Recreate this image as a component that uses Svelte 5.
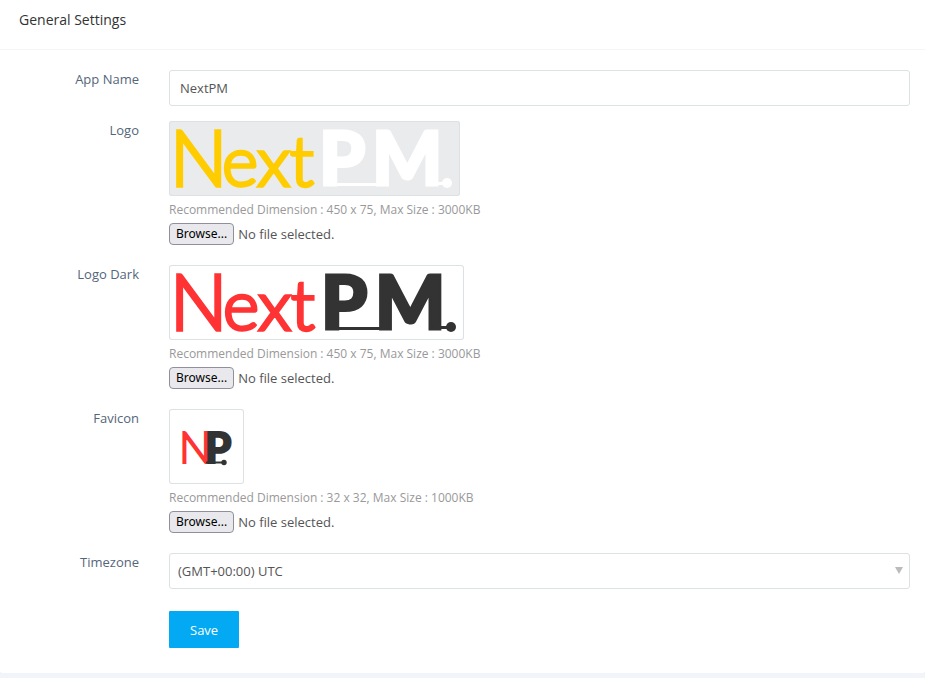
<script>
  let appName = $state('NextPM');
  let timezone = $state('UTC');
  let picked = $state({});
  let inputs = $state({});

  const uploads = [
    { id: 'logo', label: 'Logo', hint: 'Recommended Dimension : 450 x 75, Max Size : 3000KB' },
    { id: 'logo-dark', label: 'Logo Dark', hint: 'Recommended Dimension : 450 x 75, Max Size : 3000KB' },
    { id: 'favicon', label: 'Favicon', hint: 'Recommended Dimension : 32 x 32, Max Size : 1000KB' }
  ];

  function choose(id, event) {
    picked[id] = event.currentTarget.files[0]?.name;
  }
</script>

<main class="panel">
  <header><h1>General Settings</h1></header>

  <form onsubmit={(e) => e.preventDefault()}>
    <div class="row">
      <label for="app-name">App Name</label>
      <input id="app-name" class="control" type="text" bind:value={appName} />
    </div>

    {#each uploads as item (item.id)}
      <div class="row">
        <label for={item.id}>{item.label}</label>
        <div class="upload">
          {#if item.id === 'favicon'}
            <svg class="thumb" width="75" height="75" viewBox="0 0 75 75" role="img" aria-label="Favicon preview">
              <text class="thin" x="10" y="54" font-size="43" fill="#ff3333" stroke="#ff3333" stroke-width="2">N</text>
              <text class="heavy" x="36" y="54" font-size="42" fill="#333333" stroke="#333333" stroke-width="2">P</text>
              <path d="M37 53.5H55" stroke="#333333" stroke-width="2" />
              <circle cx="55" cy="53.5" r="2.7" fill="#333333" />
            </svg>
          {:else if item.id === 'logo'}
            <svg class="thumb tinted" width="291" height="75" viewBox="0 0 291 75" role="img" aria-label="Logo preview">
              <text class="thin" x="1" y="65" font-size="76" fill="#ffcc00" stroke="#ffcc00" stroke-width="3.5">N</text>
              <text class="thin" x="53" y="65" font-size="69" fill="#ffcc00" stroke="#ffcc00" stroke-width="3.5">ext</text>
              <text class="heavy" x="150" y="64" font-size="74" fill="#ffffff" stroke="#ffffff" stroke-width="3">P</text>
              <text class="heavy" x="203" y="64" font-size="74" fill="#ffffff" stroke="#ffffff" stroke-width="3">M</text>
              <path d="M155 63.5H215M262 62.5H278" stroke="#ffffff" stroke-width="3" />
              <circle cx="278" cy="62" r="5" fill="#ffffff" />
            </svg>
          {:else}
            <svg class="thumb" width="295" height="75" viewBox="0 0 295 75" role="img" aria-label="Dark logo preview">
              <text class="thin" x="1" y="65" font-size="76" fill="#ff3333" stroke="#ff3333" stroke-width="3.5">N</text>
              <text class="thin" x="54" y="65" font-size="69" fill="#ff3333" stroke="#ff3333" stroke-width="3.5">ext</text>
              <text class="heavy" x="152" y="64" font-size="74" fill="#333333" stroke="#333333" stroke-width="3">P</text>
              <text class="heavy" x="206" y="64" font-size="74" fill="#333333" stroke="#333333" stroke-width="3">M</text>
              <path d="M157 63.5H217M266 62.5H282" stroke="#333333" stroke-width="3" />
              <circle cx="282" cy="62" r="5" fill="#333333" />
            </svg>
          {/if}
          <p class="hint">{item.hint}</p>
          <div class="file">
            <input id={item.id} type="file" hidden bind:this={inputs[item.id]} onchange={(e) => choose(item.id, e)} />
            <button type="button" class="browse" onclick={() => inputs[item.id].click()}>Browse...</button>
            <span>{picked[item.id] ?? 'No file selected.'}</span>
          </div>
        </div>
      </div>
    {/each}

    <div class="row">
      <label for="timezone">Timezone</label>
      <div class="select">
        <select id="timezone" class="control" bind:value={timezone}>
          <option value="UTC">(GMT+00:00) UTC</option>
        </select>
        <svg class="arrow" width="8" height="7" viewBox="0 0 8 7" aria-hidden="true"><path d="M0 0h8L4 7z" fill="#bbbbbb" /></svg>
      </div>
    </div>

    <div class="actions"><button type="submit" class="save">Save</button></div>
  </form>
</main>

<style>
  :global(body) {
    margin: 0;
    background: #f1f5f9;
  }
  .panel {
    background: #fff;
    border-radius: 0 0 3px 3px;
    margin-bottom: 5px;
    font-family: 'Open Sans', 'Noto Sans', sans-serif;
    font-size: 13px;
    line-height: 20px;
    color: #555;
  }
  header {
    padding: 10px 19px 19px;
    border-bottom: 1px solid #f5f5f5;
  }
  h1 {
    margin: 0;
    font-size: 14px;
    font-weight: 400;
    line-height: 20px;
    color: #333;
  }
  form {
    padding: 20px 15px 25px 0;
  }
  .row {
    display: grid;
    grid-template-columns: 139px minmax(0, 1fr);
    column-gap: 30px;
    margin-bottom: 15px;
  }
  label {
    text-align: right;
    line-height: 19px;
    color: #54667a;
  }
  .control {
    box-sizing: border-box;
    width: 100%;
    height: 36px;
    margin: 0;
    padding: 0 10px;
    border: 1px solid #dce1e4;
    border-radius: 3px;
    background: #fff;
    font: inherit;
    color: #555;
  }
  .thumb {
    display: block;
    overflow: visible;
    border-radius: 3px;
    box-shadow: inset 0 0 0 1px #dce1e4;
  }
  .tinted {
    background: #e9ebed;
  }
  .thin {
    font-family: Lato, sans-serif;
    font-weight: 300;
  }
  .heavy {
    font-family: Lato, sans-serif;
    font-weight: 900;
  }
  .upload {
    padding-bottom: 6px;
  }
  .hint {
    margin: 4px 0 3px;
    font-size: 12px;
    color: #999;
  }
  .file {
    display: flex;
    align-items: center;
    gap: 4px;
    height: 21px;
  }
  .browse {
    box-sizing: border-box;
    height: 22px;
    padding: 0 6px;
    border: 1px solid #8f8f9d;
    border-radius: 4px;
    background: #e9e9ed;
    font-family: 'Noto Sans', sans-serif;
    font-size: 12px;
    line-height: 20px;
    color: #000;
  }
  .select {
    position: relative;
  }
  select.control {
    appearance: none;
    padding: 0 24px 0 8px;
  }
  .arrow {
    position: absolute;
    top: 14px;
    right: 7px;
    pointer-events: none;
  }
  .actions {
    padding: 7px 0 0 169px;
  }
  .save {
    display: block;
    height: 37px;
    padding: 0 21px;
    border: 0;
    border-radius: 1px;
    background: #03a9f3;
    font: inherit;
    color: #fff;
  }
</style>
